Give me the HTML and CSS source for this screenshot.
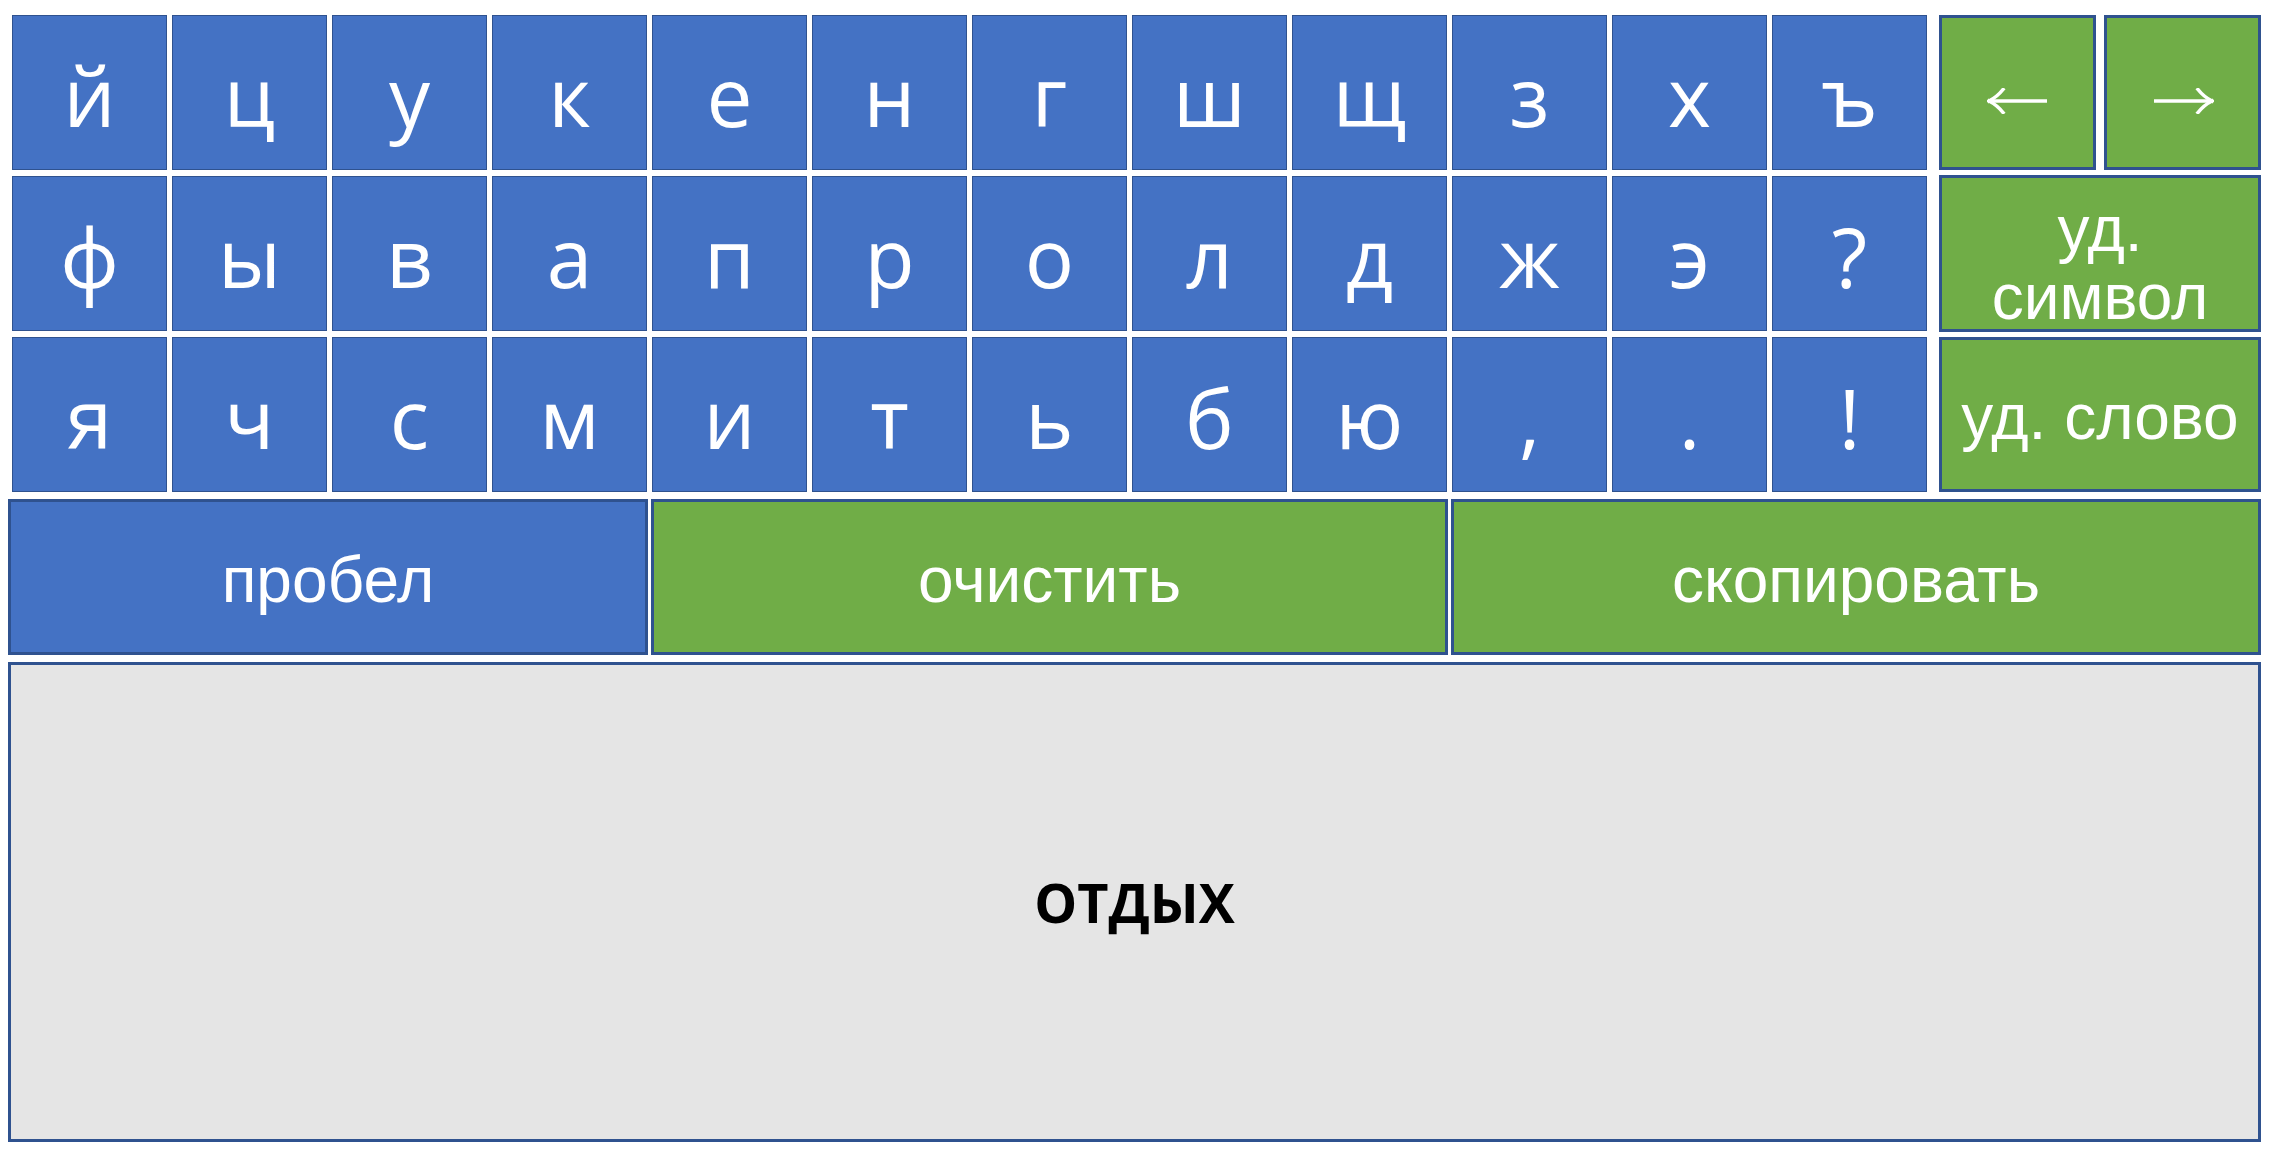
FILE: index.html
```html
<!DOCTYPE html>
<html lang="ru">
<head>
<meta charset="utf-8">
<title>Клавиатура</title>
<link rel="stylesheet" href="styles.css">
</head>
<body>
<div class="board">
  <div class="top">
    <div class="letters">
      <div class="key">й</div><div class="key">ц</div><div class="key">у</div><div class="key">к</div><div class="key">е</div><div class="key">н</div><div class="key">г</div><div class="key">ш</div><div class="key">щ</div><div class="key">з</div><div class="key">х</div><div class="key">ъ</div>
      <div class="key">ф</div><div class="key">ы</div><div class="key">в</div><div class="key">а</div><div class="key">п</div><div class="key">р</div><div class="key">о</div><div class="key">л</div><div class="key">д</div><div class="key">ж</div><div class="key">э</div><div class="key">?</div>
      <div class="key">я</div><div class="key">ч</div><div class="key">с</div><div class="key">м</div><div class="key">и</div><div class="key">т</div><div class="key">ь</div><div class="key">б</div><div class="key">ю</div><div class="key">,</div><div class="key">.</div><div class="key">!</div>
    </div>
    <div class="controls">
      <div class="ctl arrow">
        <svg width="62" height="26" viewBox="0 0 62 26"><path d="M4 13 H60" stroke="#fff" stroke-width="3.6" fill="none"/><path d="M2 13 Q10 9 16 1.5 M2 13 Q10 17 16 24.5" stroke="#fff" stroke-width="3.6" fill="none" stroke-linecap="square"/></svg>
      </div>
      <div class="ctl arrow">
        <svg width="62" height="26" viewBox="0 0 62 26"><path d="M2 13 H58" stroke="#fff" stroke-width="3.6" fill="none"/><path d="M60 13 Q52 9 46 1.5 M60 13 Q52 17 46 24.5" stroke="#fff" stroke-width="3.6" fill="none" stroke-linecap="square"/></svg>
      </div>
      <div class="ctl wide two-line">уд.<br>символ</div>
      <div class="ctl wide">уд. слово</div>
    </div>
  </div>
  <div class="actions">
    <div class="action blue">пробел</div>
    <div class="action green">очистить</div>
    <div class="action green">скопировать</div>
  </div>
  <div class="output">ОТДЫХ</div>
</div>
</body>
</html>
```

FILE: styles.css
```css
html, body {
  margin: 0;
  padding: 0;
  background: #ffffff;
}

.board {
  width: 2253px;
  margin-left: 8px;
  padding-top: 15px;
  display: flex;
  flex-direction: column;
}

.top {
  display: flex;
  align-items: flex-start;
}

.letters {
  margin-left: 4px;
  display: grid;
  grid-template-columns: repeat(12, 155px);
  grid-auto-rows: 155px;
  column-gap: 5px;
  row-gap: 6px;
}

.key {
  box-sizing: border-box;
  background: #4472c4;
  border: 1.5px solid #2f528f;
  color: #ffffff;
  font-family: "Open Sans", "Noto Sans", sans-serif;
  font-size: 82px;
  line-height: 1;
  padding-top: 4px;
  display: flex;
  align-items: center;
  justify-content: center;
}

.controls {
  margin-left: 12px;
  display: grid;
  grid-template-columns: 157px 157px;
  grid-template-rows: 155px 157px 155px;
  column-gap: 8px;
  row-gap: 5px;
}

.ctl {
  box-sizing: border-box;
  background: #70ad47;
  border: 3px solid #2f528f;
  color: #ffffff;
  font-family: "Liberation Sans", Arial, sans-serif;
  font-size: 64px;
  line-height: 1;
  padding-top: 4px;
  display: flex;
  align-items: center;
  justify-content: center;
  text-align: center;
}

.arrow svg {
  margin-top: 12px;
}

.wide {
  grid-column: 1 / 3;
}

.two-line {
  line-height: 68px;
  padding-top: 18px;
}

.actions {
  margin-top: 7px;
  display: grid;
  grid-template-columns: 640px 797px 810px;
  column-gap: 3px;
  height: 156px;
}

.action {
  box-sizing: border-box;
  border: 3px solid #2f528f;
  color: #ffffff;
  font-family: "Liberation Sans", Arial, sans-serif;
  font-size: 64px;
  line-height: 1;
  padding-top: 5px;
  display: flex;
  align-items: center;
  justify-content: center;
}

.blue {
  background: #4472c4;
}

.green {
  background: #70ad47;
}

.output {
  margin-top: 7px;
  box-sizing: border-box;
  height: 480px;
  background: #e5e5e5;
  border: 3px solid #2f528f;
  color: #000000;
  font-family: "Open Sans", "Noto Sans", sans-serif;
  font-weight: 700;
  font-size: 54px;
  display: flex;
  align-items: center;
  justify-content: center;
}
```
